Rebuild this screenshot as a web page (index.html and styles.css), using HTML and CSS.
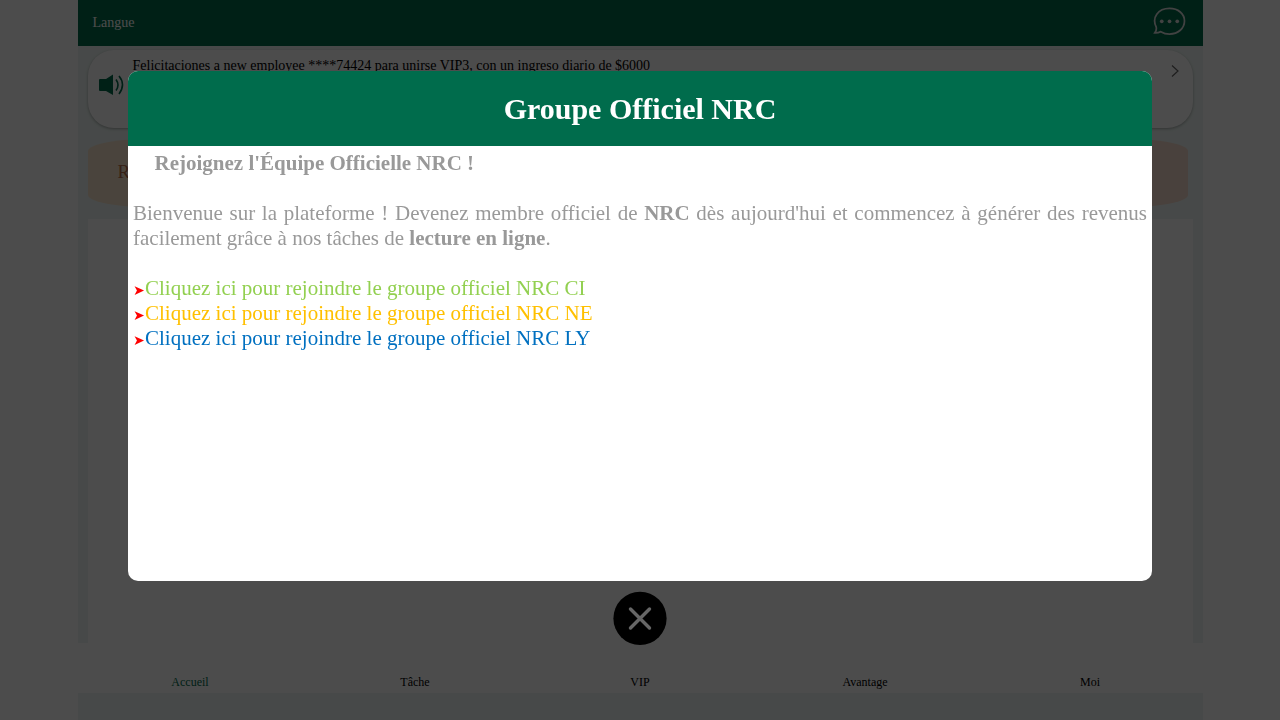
FILE: index.html
```
<!DOCTYPE html>
<html lang="fr">
<head>
  <meta charset="UTF-8">
  <meta name="viewport" content="width=device-width, initial-scale=1.0">
  <title>NRC</title>
  <link rel="stylesheet" href="styles.css">
</head>
<body>
  <div class="page">
    <header class="header">
      <span>Langue</span>
      <svg class="chat" viewBox="0 0 34 30" fill="none" stroke="#ddd" stroke-width="1.8">
        <path d="M3.2 20.5C-1.5 11 5 1.500 17 1.500C26 1.500 32.500 7 32.500 14.500C32.500 22 26 28 17 28C13.500 28 10.500 27 8 25.500C6 26.500 4 27 1.800 26.800C3.300 25 3.700 22.800 3.200 20.500Z"/>
        <g fill="#ddd" stroke="none">
          <circle cx="9" cy="14.800" r="1.900"/>
          <circle cx="17" cy="14.800" r="1.900"/>
          <circle cx="25" cy="14.800" r="1.900"/>
        </g>
      </svg>
    </header>

    <div class="notice">
      <svg class="speaker" viewBox="0 0 26 22">
        <path fill="#006c4c" d="M1 5h6l7-4.500v20.500l-7-4H1a1 1 0 0 1-1-1V6a1 1 0 0 1 1-1z"/>
        <path fill="none" stroke="#006c4c" stroke-width="1.600" d="M17 5.500q4 5.500 0 11M20 2q7 8.500 0 18"/>
      </svg>
      <p>Felicitaciones a new employee ****74424 para unirse VIP3, con un ingreso diario de $6000</p>
      <svg class="arrow" viewBox="0 0 8 12"><path fill="none" stroke="#666" stroke-width="1.200" d="M1 .5L7 6L1 11.500"/></svg>
    </div>

    <div class="banner">R</div>
    <div class="content"></div>

    <nav class="tabs">
      <a class="active">Accueil</a>
      <a>Tâche</a>
      <a>VIP</a>
      <a>Avantage</a>
      <a>Moi</a>
    </nav>
  </div>

  <div class="overlay">
    <div class="modal">
      <h1>Groupe Officiel NRC</h1>
      <div class="modal-body">
        <p class="join"><b>Rejoignez l'Équipe Officielle NRC !</b></p>
        <br>
        <p>Bienvenue sur la plateforme ! Devenez membre officiel de <b>NRC</b> dès aujourd'hui et commencez à générer des revenus facilement grâce à nos tâches de <b>lecture en ligne</b>.</p>
        <br>
        <p class="ci"><span class="bullet">➤</span>Cliquez ici pour rejoindre le groupe officiel NRC CI</p>
        <p class="ne"><span class="bullet">➤</span>Cliquez ici pour rejoindre le groupe officiel NRC NE</p>
        <p class="ly"><span class="bullet">➤</span>Cliquez ici pour rejoindre le groupe officiel NRC LY</p>
      </div>
    </div>
    <svg class="close" viewBox="0 0 54 54">
      <circle cx="27" cy="27.400" r="26.600"/>
      <path stroke="#666" stroke-width="3.400" stroke-linecap="round" d="M17.500 18L36.500 37M36.500 18L17.500 37"/>
    </svg>
  </div>
</body>
</html>
```
FILE: styles.css
```
* {
  box-sizing: border-box;
}
body {
  margin: 0;
  background: #fff;
  font-family: "Liberation Serif", "Times New Roman", serif;
  overflow: hidden;
}
p {
  margin: 0;
}
.page {
  width: 1125px;
  height: 720px;
  margin: 0 auto;
  background: #edf6f3;
  display: flex;
  flex-direction: column;
}
.header {
  height: 46px;
  flex: none;
  padding: 0 17px 1px 15px;
  background: #006c4c;
  color: #fff;
  font-size: 14px;
  display: flex;
  align-items: center;
  justify-content: space-between;
}
.chat {
  width: 33px;
  height: 29px;
  margin-bottom: 3px;
}

.notice {
  height: 78px;
  margin: 4px 10px 0;
  padding: 6px 14px 0 10px;
  background: #fff;
  border-radius: 26px;
  box-shadow: 0 1px 3px rgba(0, 0, 0, .3);
  font-size: 14px;
  display: flex;
}
.speaker {
  width: 26px;
  height: 22px;
  margin: 18px 8px 0 1px;
}
.notice p {
  flex: 1;
  padding-top: 1px;
  line-height: 18px;
}
.arrow {
  width: 8px;
  height: 12px;
  margin-top: 9px;
}

.banner {
  width: 1100px;
  height: 70px;
  margin: 10px 0 0 10px;
  padding-left: 30px;
  border-radius: 75px / 13px;
  background: linear-gradient(90deg, #f8e4cd, #f5d9cb);
  color: #b9704a;
  font-size: 19px;
  line-height: 67px;
}
.content {
  flex: 1;
  margin: 11px 10px 0;
  background: #fff;
}

.tabs {
  height: 50px;
  margin-bottom: 27px;
  background: #fff;
  font-size: 12px;
  display: flex;
  align-items: flex-end;
}
.tabs a {
  flex: 1;
  padding-bottom: 3px;
  text-align: center;
}
.tabs .active {
  color: #006c4c;
}

.overlay {
  position: fixed;
  inset: 0;
  padding-top: 71.3px;
  background: rgba(0, 0, 0, .7);
  display: flex;
  flex-direction: column;
  align-items: center;
}
.modal {
  width: 1024px;
  height: 510px;
  border-radius: 10px;
  overflow: hidden;
  background: #fff;
}
.modal h1 {
  margin: 0;
  height: 75px;
  line-height: 75px;
  background: #006c4c;
  color: #fff;
  font-size: 30px;
  text-align: center;
}
.modal-body {
  padding: 5px;
  color: #999;
  font-size: 21px;
  line-height: 25px;
  text-align: justify;
}
.join {
  padding-left: 21.5px;
}
.bullet {
  color: #f00;
  font-size: 14px;
  line-height: 1;
}
.ci {
  color: #92d050;
}
.ne {
  color: #ffc000;
}
.ly {
  color: #0070c0;
}
.close {
  width: 54px;
  height: 54px;
  margin-top: 10px;
}
```
